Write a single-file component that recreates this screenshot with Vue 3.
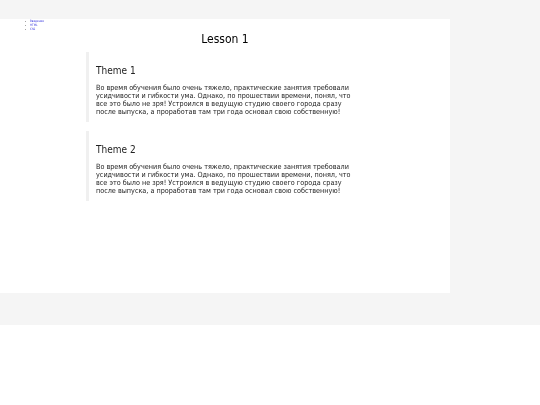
<script setup>
const text = ['Во время обучения было очень тяжело, практические занятия требовали', 'усидчивости и гибкости ума. Однако, по прошествии времени, понял, что', 'все это было не зря! Устроился в ведущую студию своего города сразу', 'после выпуска, а проработав там три года основал свою собственную!']
const themes = ['Theme 1', 'Theme 2']
const links = ['Введение', 'HTML', 'CSS']
</script>

<template>
  <div class="page">
    <div class="main">
      <ul class="nav">
        <li v-for="l in links" :key="l"><a href="#">{{ l }}</a></li>
      </ul>
      <h1>Lesson 1</h1>
      <section v-for="t in themes" :key="t" class="theme">
        <h2>{{ t }}</h2>
        <p><span v-for="line in text" :key="line" class="line">{{ line }}</span></p>
      </section>
    </div>
  </div>
</template>

<style>
html, body { margin: 0; background: #fff; }
</style>

<style scoped>
.page {
  height: 325px;
  box-sizing: border-box;
  padding-top: 19px;
  background: #f5f5f5;
  font-family: "DejaVu Sans Condensed", "DejaVu Sans", sans-serif;
  font-stretch: condensed;
}
.main {
  width: 450px;
  height: 274px;
  background: #fff;
  overflow: hidden;
}
.nav {
  margin: 0;
  padding: 0 0 0 25px;
  list-style: none;
  font-size: 3px;
  line-height: 4px;
  height: 10px;
  will-change: opacity;
}
.nav li { display: flex; align-items: center; gap: 4px; }
.nav li::before {
  content: "";
  width: 1px;
  height: 1px;
  border-radius: 50%;
  background: #888;
}
.nav a { color: #3333dd; text-decoration: none; }
h1 {
  margin: 0 0 3px;
  font-size: 12px;
  line-height: 20px;
  font-weight: 400;
  color: #000;
  text-align: center;
  will-change: opacity;
}
.theme {
  margin: 0 0 9px 86px;
  width: 270px;
  box-sizing: border-box;
  border-left: 3px solid #f0f0f0;
  padding: 12px 0 0 7px;
  height: 70px;
  will-change: opacity;
}
h2 {
  margin: 0 0 6px;
  font-size: 10px;
  line-height: 14px;
  font-weight: 400;
  color: #222;
}
p {
  margin: 0;
  font-size: 7.2px;
  line-height: 8px;
  color: #222;
}
.line { display: block; white-space: nowrap; }
</style>
